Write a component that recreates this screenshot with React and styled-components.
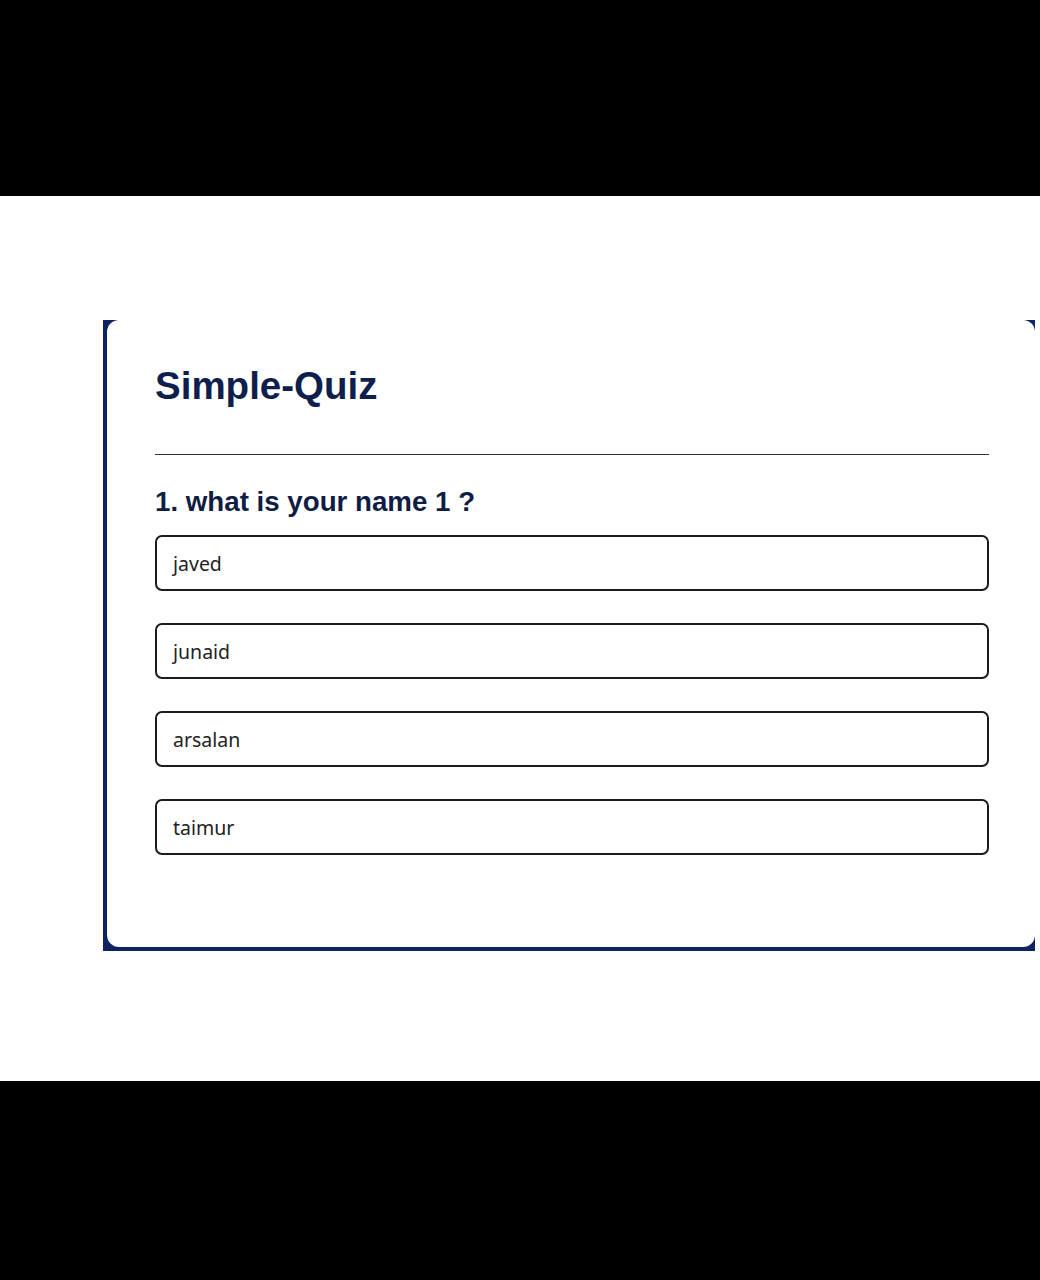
import React from 'react';
import styled, { createGlobalStyle } from 'styled-components';

const GlobalStyle = createGlobalStyle`
  html, body {
    margin: 0;
    padding: 0;
    background: #000;
  }
  * {
    box-sizing: border-box;
  }
`;

const options = ['javed', 'junaid', 'arsalan', 'taimur'];

// Barres noires en haut et en bas, zone blanche au milieu
const Screen = styled.div`
  width: 1040px;
  height: 1280px;
  display: flex;
  flex-direction: column;
  background: #000;
`;

const Letterbox = styled.div`
  height: ${props => props.size}px;
  background: #000;
  flex-shrink: 0;
`;

const Stage = styled.main`
  height: 885px;
  background: #fff;
  padding: 124px 5px 0 103px;
`;

// Le fond bleu qui dépasse à gauche et en bas de la carte
const CardFrame = styled.section`
  background: #0d2461;
  padding: 0 0 4px 4px;
`;

const Card = styled.div`
  background: #fff;
  border-radius: 12px;
  padding: 44px 46px 92px 48px;
`;

const Title = styled.h1`
  margin: 0;
  font-family: "Liberation Sans", Arial, sans-serif;
  font-weight: 700;
  font-size: 38.5px;
  line-height: 44px;
  color: #0f1f4d;
`;

const Divider = styled.hr`
  margin: 46px 0 0;
  border: 0;
  border-top: 1.5px solid #333;
`;

const Question = styled.h2`
  margin: 30px 0 0;
  font-family: "Liberation Sans", Arial, sans-serif;
  font-weight: 700;
  font-size: 27.7px;
  line-height: 34px;
  color: #0f1d45;
`;

const OptionList = styled.div`
  display: flex;
  flex-direction: column;
  gap: 32px;
  margin-top: 16px;
`;

const Option = styled.button`
  height: 56px;
  width: 100%;
  display: flex;
  align-items: center;
  padding: 0 16px;
  background: #fff;
  border: 2px solid #1c1c1c;
  border-radius: 7px;
  font-family: "Noto Sans", "Open Sans", sans-serif;
  font-size: 19.5px;
  color: #222;
  text-align: left;
  cursor: pointer;
`;

export default function App() {
  return (
    <Screen>
      <GlobalStyle />
      <Letterbox size={196} />
      <Stage>
        <CardFrame>
          <Card>
            <Title>Simple-Quiz</Title>
            <Divider />
            <Question>1. what is your name 1 ?</Question>
            <OptionList>
              {options.map(opt => (
                <Option key={opt}>{opt}</Option>
              ))}
            </OptionList>
          </Card>
        </CardFrame>
      </Stage>
      <Letterbox size={199} />
    </Screen>
  );
}
